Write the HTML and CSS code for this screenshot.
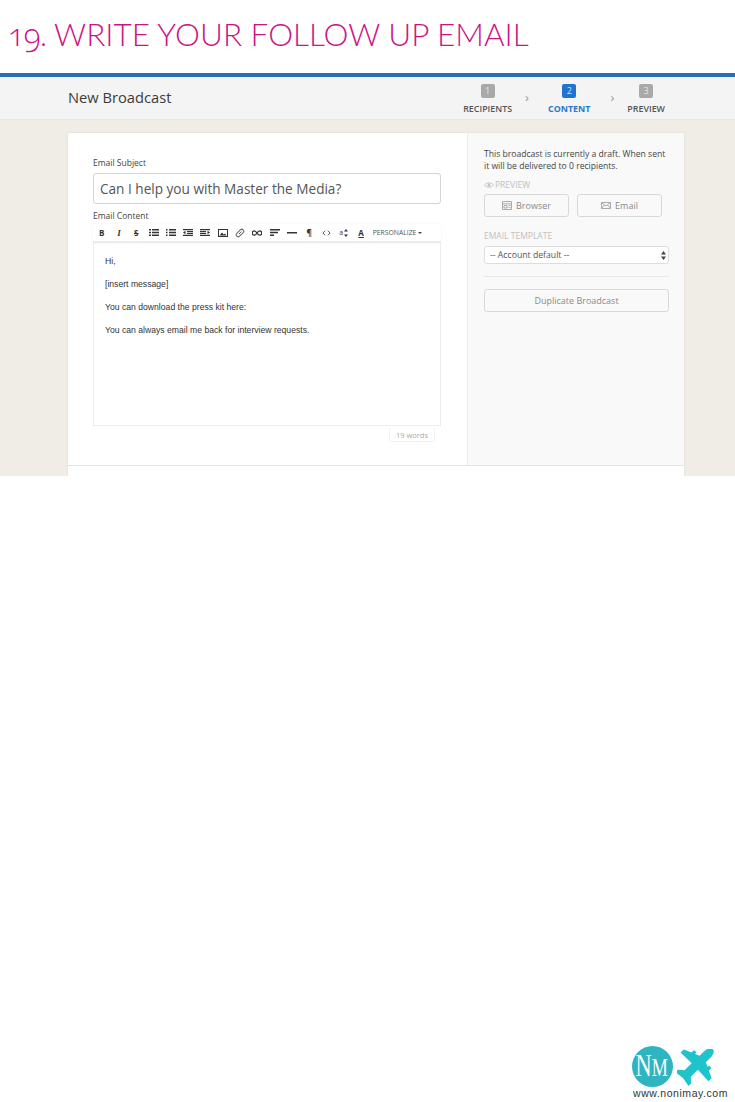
FILE: index.html
```html
<!DOCTYPE html>
<html>
<head>
    <title>Write Your Follow Up Email</title>
    <link rel="stylesheet" href="styles.css">
</head>
<body>
<div class="page">
    <h1 class="page-title"><span class="title-num">19.</span> WRITE YOUR FOLLOW UP EMAIL</h1>

    <div class="app">
        <div class="topbar">
            <div class="topbar-title">New Broadcast</div>
            <div class="steps">
                <div class="step"><span class="step-num">1</span><span class="step-label">RECIPIENTS</span></div>
                <span class="step-arrow">&rsaquo;</span>
                <div class="step step-active"><span class="step-num">2</span><span class="step-label">CONTENT</span></div>
                <span class="step-arrow step-arrow-last">&rsaquo;</span>
                <div class="step"><span class="step-num">3</span><span class="step-label">PREVIEW</span></div>
            </div>
        </div>

        <div class="card">
            <div class="card-row">
                <div class="main">
                    <label class="field-label">Email Subject</label>
                    <div class="subject">Can I help you with Master the Media?</div>
                    <label class="field-label content-label">Email Content</label>
                    <div class="toolbar">
                        <span class="tool tool-b">B</span>
                        <span class="tool tool-i">I</span>
                        <span class="tool tool-s">S</span>
                        <span class="tool"><svg width="10" height="7" viewBox="0 0 10 7"><path d="M0 0h2v1.400H0zM0 2.800h2v1.400H0zM0 5.600h2V7H0zM3 0h7v1.400H3zM3 2.800h7v1.400H3zM3 5.600h7V7H3z"/></svg></span>
                        <span class="tool"><svg width="10" height="7" viewBox="0 0 10 7"><path d="M0 0h1.500v1.400H0zM0 2.800h1.500v1.400H0zM0 5.600h1.500V7H0zM3 0h7v1.400H3zM3 2.800h7v1.400H3zM3 5.600h7V7H3z"/></svg></span>
                        <span class="tool"><svg width="10" height="7" viewBox="0 0 10 7"><path d="M0 0h10v1.200H0zM4 2h6v1.200H4zM4 3.900h6v1.200H4zM0 5.800h10V7H0zM0 3.500l2.500-1.700v3.400z"/></svg></span>
                        <span class="tool"><svg width="10" height="7" viewBox="0 0 10 7"><path d="M0 0h10v1.200H0zM0 2h6v1.200H0zM0 3.900h6v1.200H0zM0 5.800h10V7H0zM10 3.500L7.500 1.800v3.400z"/></svg></span>
                        <span class="tool"><svg width="10" height="8" viewBox="0 0 10 8"><path d="M0 0h10v8H0z"/><path fill="#fff" d="M1 1h8v6H1z"/><path d="M1.500 6.500l2.500-3 1.800 2 1.200-1 1.500 2z"/></svg></span>
                        <span class="tool"><svg width="10" height="10" viewBox="0 0 10 10"><rect x="0.500" y="3" width="9" height="4" rx="2" fill="none" stroke="#666" transform="rotate(-45 5 5)"/><path fill="none" stroke="#666" d="M3.800 6.200l2.600-2.600"/></svg></span>
                        <span class="tool"><svg width="10" height="6" viewBox="0 0 10 6"><path fill="none" stroke="#333" stroke-width="1.300" d="M5 3C4 1.400 3.300.8 2.400.8a2.200 2.200 0 0 0 0 4.400C3.300 5.200 4 4.600 5 3s1.700-2.200 2.600-2.200a2.200 2.200 0 0 1 0 4.400C6.700 5.200 6 4.600 5 3z"/></svg></span>
                        <span class="tool"><svg width="10" height="7" viewBox="0 0 10 7"><path d="M0 0h10v1.600H0zM0 2.700h8v1.600H0zM0 5.400h4V7H0z"/></svg></span>
                        <span class="tool"><svg width="10" height="2" viewBox="0 0 10 2"><path d="M0 0h10v1.500H0z"/></svg></span>
                        <span class="tool tool-b">&para;</span>
                        <span class="tool"><svg width="9" height="6" viewBox="0 0 10 6"><path fill="none" stroke="#444" d="M3.500.5L1 3l2.500 2.500M6.500.5L9 3 6.500 5.500"/></svg></span>
                        <span class="tool tool-size"><span>a</span><svg width="4" height="8" viewBox="0 0 4 8"><path d="M2 0l2 2.500H0zM2 8L0 5.500h4z"/></svg></span>
                        <span class="tool tool-color">A</span>
                        <span class="personalize">PERSONALIZE<i class="caret"></i></span>
                    </div>
                    <div class="editor">
                        <p>Hi,</p>
                        <p>[insert message]</p>
                        <p>You can download the press kit here:</p>
                        <p>You can always email me back for interview requests.</p>
                    </div>
                    <div class="word-row"><span class="word-count">19 words</span></div>
                </div>

                <div class="side">
                    <p class="side-note">This broadcast is currently a draft. When sent it will be delivered to 0 recipients.</p>
                    <div class="side-label preview-label">
                        <svg width="10" height="6" viewBox="0 0 10 6"><path fill="none" stroke="#c4c4c4" d="M.5 3C3 .2 7 .2 9.500 3 7 5.800 3 5.800.5 3z"/><circle cx="5" cy="3" r="1.500" fill="#c4c4c4"/></svg>
                        PREVIEW
                    </div>
                    <div class="preview-btns">
                        <div class="btn">
                            <svg width="10" height="9" viewBox="0 0 10 9"><path fill="none" stroke="#aaa" d="M.5.5h9v8h-9zM.5 2.800h9M2 4.500h3v2.500H2zM6.500 4.500h2M6.500 6.500h2"/></svg>
                            Browser
                        </div>
                        <div class="btn">
                            <svg width="10" height="7" viewBox="0 0 10 7"><path fill="none" stroke="#aaa" d="M.5.5h9v6h-9zM.5.5L5 4l4.500-3.500M.5 6.500l3-3.500M9.500 6.500l-3-3.500"/></svg>
                            Email
                        </div>
                    </div>
                    <div class="side-label template-label">EMAIL TEMPLATE</div>
                    <div class="select">
                        <span>-- Account default --</span>
                        <svg width="5" height="9" viewBox="0 0 5 9"><path d="M2.500 0L5 3.500H0zM2.500 9L0 5.500h5z"/></svg>
                    </div>
                    <div class="side-rule"></div>
                    <div class="btn btn-wide">Duplicate Broadcast</div>
                </div>
            </div>
            <div class="card-foot"></div>
        </div>
    </div>

    <div class="brand">
        <div class="brand-marks">
            <svg class="brand-circle" width="41" height="41" viewBox="0 0 41 41">
                <circle cx="20.500" cy="20.500" r="20.500" fill="#31b4c1"/>
                <text transform="translate(3.500 30) scale(.7 1)" class="brand-nm">N<tspan class="brand-m">M</tspan></text>
            </svg>
            <svg class="brand-plane" width="38" height="38" viewBox="0 0 38 38">
                <g fill="#1fc3ca" transform="translate(20 15.500) rotate(46)">
                    <path d="M0-22C2.500-22 4.500-19 4.500-14V-8L20-1V3.500L4.500 3V13L9.500 17.500V21L0 19.500-9.500 21V17.500L-4.500 13V3L-20 3.500V-1L-4.500-8V-14C-4.500-19-2.500-22 0-22z"/>
                    <path d="M9-8h3.500v5H9zM-12.500-8H-9v5h-3.500z"/>
                </g>
            </svg>
        </div>
        <div class="brand-url">www.nonimay.com</div>
    </div>
</div>
</body>
</html>
```
FILE: styles.css
```css
body {
    margin: 0;
    padding: 0;
    background: #fff;
    font-family: "Open Sans", sans-serif;
    color: #444;
}
.page {
    display: flex;
    flex-direction: column;
    height: 1102px;
    overflow: hidden;
}
.page-title {
    margin: 0;
    height: 73px;
    box-sizing: border-box;
    padding: 15px 0 0 8px;
    font-family: Lato, sans-serif;
    font-size: 31.500px;
    line-height: 38px;
    font-weight: 300;
    letter-spacing: 0;
    color: #cc1385;
    white-space: nowrap;
}
.title-num {
    font-family: "Open Sans", sans-serif;
    font-variant-numeric: oldstyle-nums;
    letter-spacing: -1px;
}

/* app screenshot part */
.app {
    height: 403px;
    box-sizing: border-box;
    border-top: 4px solid #2a6ebb;
    background: #f0ede6;
    overflow: hidden;
}
.topbar {
    display: flex;
    justify-content: space-between;
    height: 43px;
    box-sizing: border-box;
    padding: 0 70px 0 68px;
    background: #f4f4f4;
    border-bottom: 1px solid #e8e6e0;
}
.topbar-title {
    font-size: 14.700px;
    line-height: 41px;
    color: #3c3c3c;
}
.steps {
    display: flex;
    align-items: flex-start;
}
.step {
    display: flex;
    flex-direction: column;
    align-items: center;
    padding-top: 7px;
}
.step-num {
    width: 14px;
    height: 14px;
    border-radius: 2px;
    background: #a9a9a9;
    color: #e6e6e6;
    font-size: 9px;
    line-height: 14px;
    text-align: center;
}
.step-label {
    margin-top: 5px;
    font-size: 8.900px;
    line-height: 12px;
    font-weight: 600;
    color: #555;
}
.step-active .step-num {
    background: #1f74d0;
    color: #cfe2f7;
}
.step-active .step-label {
    color: #2a78cc;
    font-weight: 700;
}
.step-arrow {
    margin: 12px 19px 0 13px;
    font-size: 13px;
    line-height: 16px;
    color: #999;
}
.step-arrow-last {
    margin: 12px 13px 0 20px;
}
.card {
    width: 616px;
    height: 343px;
    margin: 13px 0 0 68px;
    background: #fff;
    box-shadow: 0 0 2px #d8d6d0;
}
.card-row {
    display: flex;
    height: 332px;
    border-bottom: 1px solid #e4e4e4;
}
.main {
    width: 400px;
    box-sizing: border-box;
    padding: 24px 26px 0 25px;
    border-right: 1px solid #ececec;
}
.field-label {
    display: block;
    font-size: 8.500px;
    line-height: 12px;
    color: #444;
}
.subject {
    height: 31px;
    box-sizing: border-box;
    margin-top: 4px;
    padding-left: 6px;
    border: 1px solid #d4d4d4;
    border-radius: 3px;
    font-size: 13.600px;
    line-height: 29px;
    color: #555;
    white-space: nowrap;
}
.content-label {
    margin-top: 6px;
}
.toolbar {
    display: flex;
    align-items: center;
    height: 17px;
    margin-top: 2px;
    border-bottom: 2px solid #ececec;
    box-shadow: 0 0 2px #eee;
}
.tool {
    display: flex;
    flex: none;
    justify-content: center;
    align-items: center;
    width: 17.300px;
    height: 16px;
    font-size: 8px;
    color: #333;
}
.tool svg {
    fill: #333;
}
.tool-b {
    font-weight: 700;
}
.tool-i {
    font-family: "Liberation Serif", serif;
    font-style: italic;
    font-weight: 700;
    font-size: 9px;
}
.tool-s {
    font-weight: 700;
    text-decoration: line-through;
}
.tool-size {
    gap: 1px;
    font-size: 7px;
}
.tool-color {
    font-weight: 700;
    text-decoration: underline;
}
.personalize {
    margin-left: 3px;
    font-size: 6.800px;
    color: #555;
    white-space: nowrap;
}
.caret {
    display: inline-block;
    margin-left: 2px;
    vertical-align: middle;
    border-top: 2px solid #444;
    border-left: 2px solid transparent;
    border-right: 2px solid transparent;
}
.editor {
    height: 183px;
    box-sizing: border-box;
    padding: 7px 11px 0;
    border: 1px solid #ececec;
    border-top: 0;
    font-family: "Liberation Sans", sans-serif;
    font-size: 8.630px;
    line-height: 11px;
    color: #333;
}
.editor p {
    margin: 6px 0 12px;
}
.word-row {
    display: flex;
    justify-content: flex-end;
    padding-right: 6px;
}
.word-count {
    width: 46px;
    height: 14px;
    box-sizing: border-box;
    border: 1px solid #f2f2f2;
    border-top: 0;
    margin-top: 2px;
    font-size: 7.500px;
    line-height: 14px;
    text-align: center;
    color: #aaa;
}
.side {
    width: 216px;
    box-sizing: border-box;
    padding: 15px 15px 0 16px;
    background: #f9f9f9;
}
.side-note {
    margin: 0;
    font-size: 8.600px;
    line-height: 12px;
    color: #444;
}
.side-label {
    font-size: 8.500px;
    line-height: 12px;
    color: #c0c0c0;
}
.preview-label {
    display: flex;
    align-items: center;
    gap: 1px;
    margin-top: 7px;
}
.preview-btns {
    display: flex;
    gap: 8px;
    margin-top: 3px;
}
.btn {
    display: flex;
    justify-content: center;
    align-items: center;
    gap: 4px;
    width: 85px;
    height: 23px;
    box-sizing: border-box;
    border: 1px solid #d8d8d8;
    border-radius: 3px;
    font-size: 9px;
    color: #8a8a8a;
}
.btn-wide {
    width: 185px;
}
.template-label {
    margin-top: 13px;
}
.select {
    display: flex;
    justify-content: space-between;
    align-items: center;
    width: 185px;
    height: 18px;
    box-sizing: border-box;
    margin-top: 4px;
    padding: 0 2px 0 5px;
    background: #fff;
    border: 1px solid #ddd;
    border-radius: 3px;
    font-size: 8.700px;
    color: #555;
}
.select svg {
    fill: #444;
}
.side-rule {
    width: 185px;
    margin: 12px 0 12px;
    border-top: 1px solid #e8e8e8;
}

/* logo bottom right */
.brand {
    display: flex;
    flex-direction: column;
    align-items: flex-end;
    margin-top: auto;
    padding: 0 7px 2px 0;
}
.brand-marks {
    display: flex;
    align-items: flex-start;
    gap: 4px;
    padding-right: 13px;
}
.brand-plane {
    margin-top: 3px;
}
.brand-nm {
    font-family: "Liberation Serif", serif;
    font-size: 32px;
    fill: #fff;
}
.brand-m {
    font-size: 26px;
}
.brand-url {
    font-family: "Liberation Sans", sans-serif;
    font-size: 10.500px;
    line-height: 13px;
    letter-spacing: 0.550px;
    color: #333;
}
```
